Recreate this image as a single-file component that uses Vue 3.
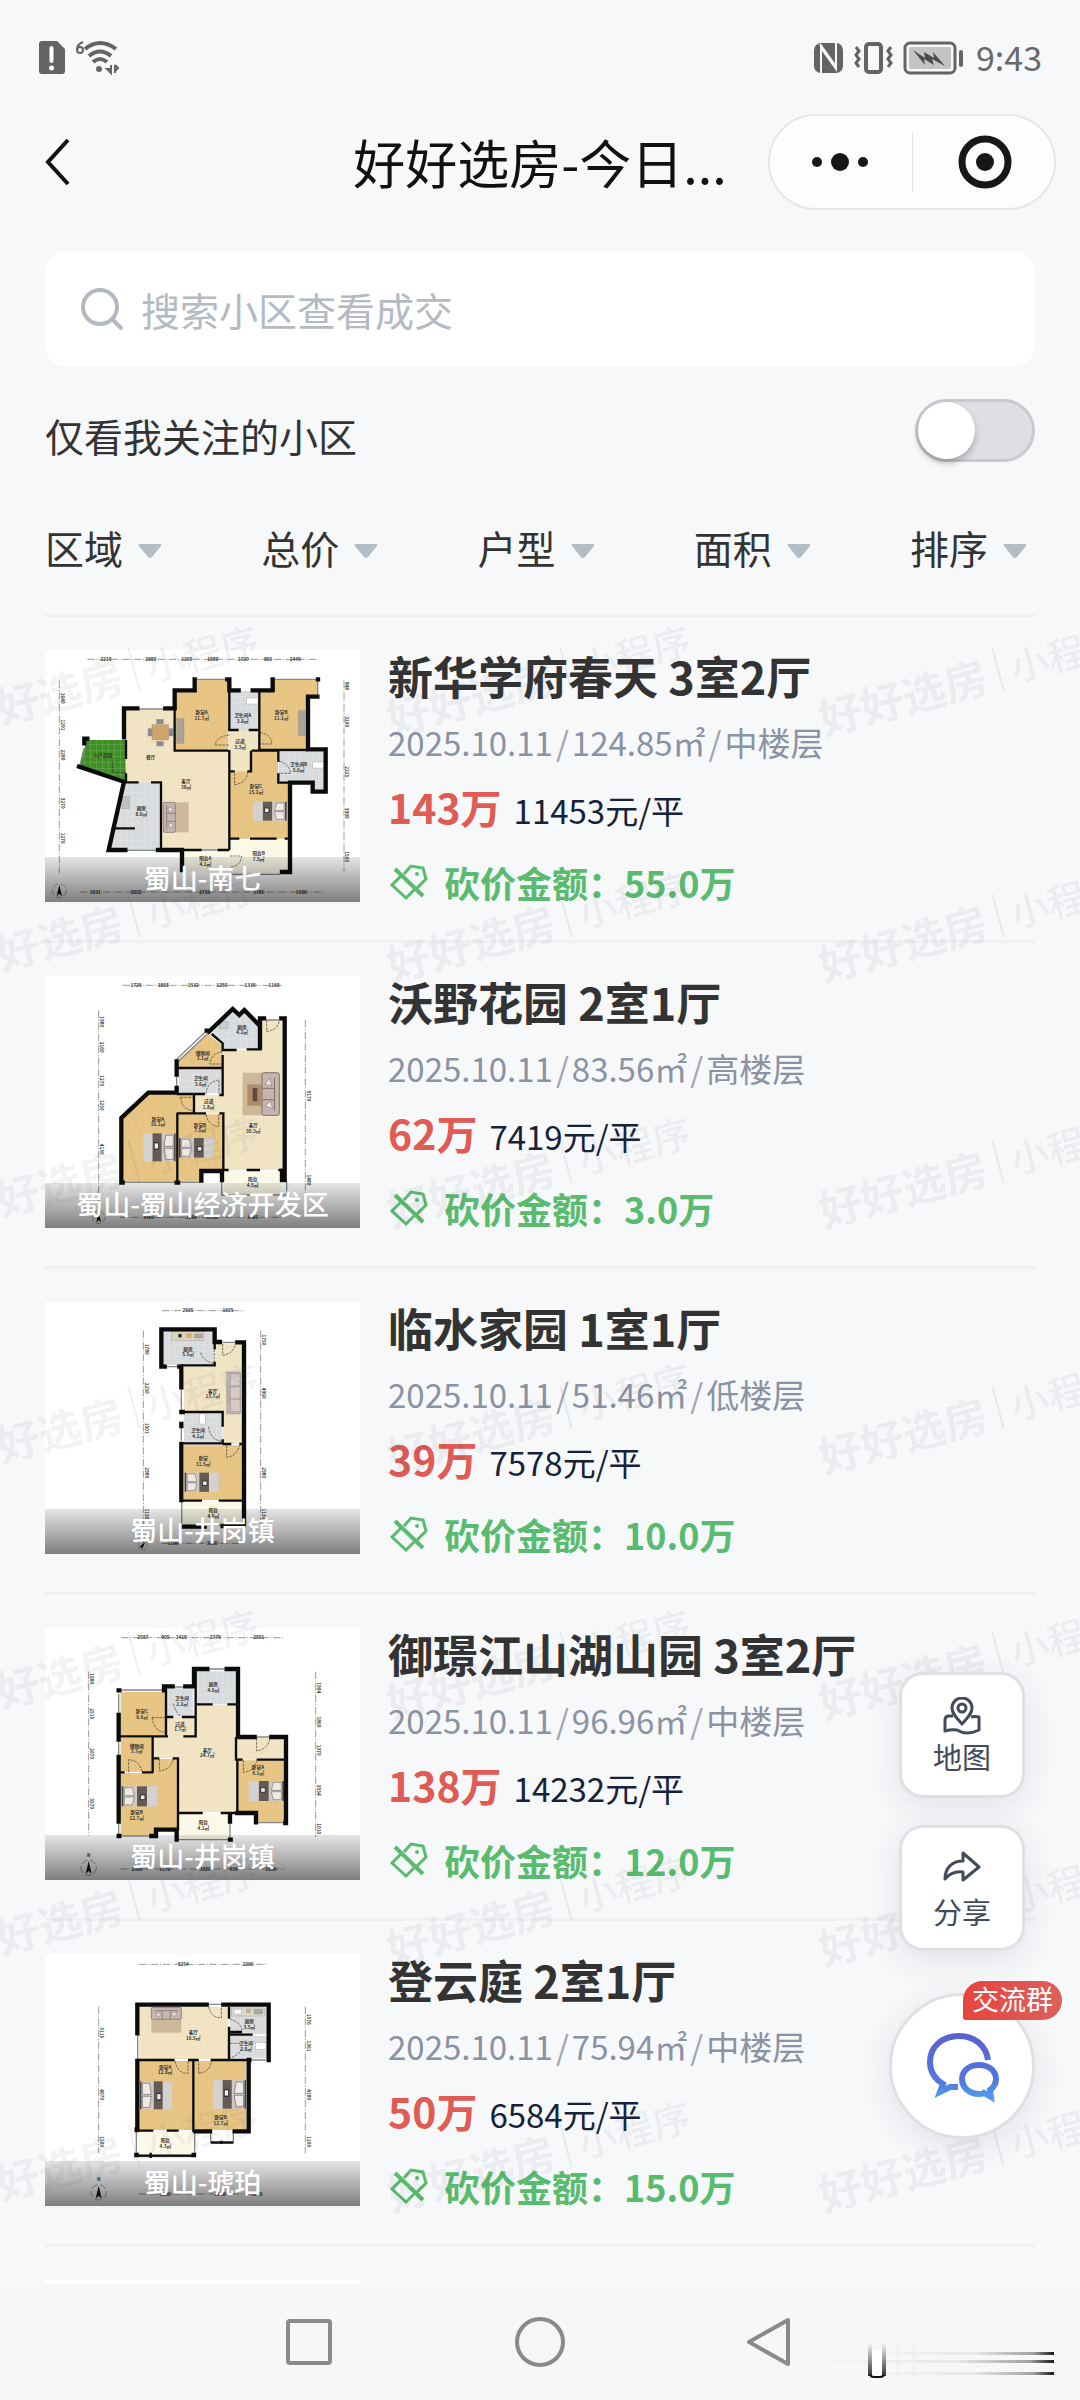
<template>
  <div class="page">
    <div class="status-bar">
      <div class="status-group">
        <svg width="82" height="38" viewBox="0 0 82 38">
          <path d="M4 3h15l8 8v22a3 3 0 0 1-3 3H4a3 3 0 0 1-3-3V6a3 3 0 0 1 3-3z" fill="#636466" />
          <path d="M13.500 10v13" stroke="#fff" stroke-width="4" stroke-linecap="round" />
          <circle cx="13.500" cy="30" r="2.500" fill="#fff" />
          <path d="M45 4c-5 2-6 5-6 8" fill="none" stroke="#636466" stroke-width="2" />
          <circle cx="42" cy="12" r="3" fill="none" stroke="#636466" stroke-width="2" />
          <g fill="none" stroke="#636466" stroke-width="4">
            <path d="M47 11q15-12 31 0" />
            <path d="M51 18q11-9 22 0" />
            <path d="M55 24q7-6 14 0" />
          </g>
          <circle cx="61" cy="31" r="3" fill="#636466" />
          <path d="M73 27v8l-4-4h4M77 27v8M77 27l3 3-3 3" fill="none" stroke="#636466" stroke-width="2" />
        </svg>
      </div>
      <div class="status-group">
        <svg width="152" height="38" viewBox="0 0 152 38">
          <rect x="2" y="5" width="29" height="30" rx="7" fill="#636466" />
          <path d="M9 35V10l15 21V5M8 6l15 21" fill="none" stroke="#f7f8fa" stroke-width="2" />
          <g fill="none" stroke="#636466" stroke-width="4">
            <rect x="54" y="6" width="15" height="28" rx="3" />
            <path d="M44 9l3 4-3 4 3 4-3 4 3 4M79 9l-3 4 3 4-3 4 3 4-3 4" stroke-width="3" />
            <rect x="93" y="5" width="50" height="30" rx="5" stroke-width="3" />
          </g>
          <rect x="97" y="9" width="42" height="22" rx="2" fill="#c2c4c5" />
          <path d="M101 12l12 8-1-6 10 6-1-6 12 14-13-7 2 6-10-6 1 6z" fill="#4b4c4d" />
          <path d="M149 14v13" stroke="#636466" stroke-width="4" stroke-linecap="round" />
        </svg>
        <span class="clock">9:43</span>
      </div>
    </div>

    <header class="nav">
      <button class="back" aria-label="返回">
        <svg width="26" height="48" viewBox="0 0 26 48">
          <path d="M24 2L4 24l20 22" fill="none" stroke="#111" stroke-width="4" />
        </svg>
      </button>
      <h1 class="nav-title">好好选房-今日...</h1>
      <div class="capsule">
        <button aria-label="更多">
          <svg width="60" height="60" viewBox="0 0 60 60" fill="#171717">
            <circle cx="6" cy="30" r="5" />
            <circle cx="29" cy="30" r="9" />
            <circle cx="52" cy="30" r="5" />
          </svg>
        </button>
        <button aria-label="关闭">
          <svg width="60" height="60" viewBox="0 0 60 60">
            <circle cx="32" cy="30" r="23" fill="none" stroke="#171717" stroke-width="7" />
            <circle cx="32" cy="30" r="9" fill="#171717" />
          </svg>
        </button>
      </div>
    </header>

    <main class="content">
      <label class="search">
        <svg width="44" height="44" viewBox="0 0 44 44" fill="none" stroke="#b3b8c0" stroke-width="4">
          <circle cx="19" cy="20" r="17" />
          <path d="M32 33l8 8" stroke-linecap="round" />
        </svg>
        <input v-model="keyword" type="text" placeholder="搜索小区查看成交" aria-label="搜索小区查看成交" />
      </label>

      <div class="follow">
        <label for="follow">仅看我关注的小区</label>
        <input id="follow" v-model="onlyFollowed" class="switch" type="checkbox" />
      </div>

      <div class="filters">
        <label v-for="f in filters" :key="f" class="filter">
          <select :aria-label="f">
            <option>{{ f }}</option>
          </select>
          <svg width="24" height="16" viewBox="0 0 24 16">
            <path d="M2 1h20q2 0 1 2L14 14q-2 2-4 0L1 3q-1-2 1-2z" fill="#b3bdc6" />
          </svg>
        </label>
      </div>

      <ul class="list">
        <li v-for="item in listings" :key="item.name" class="listing">
          <div class="thumb">
            <svg class="plan" :viewBox="item.plan.box">
              <path v-for="(r, i) in item.plan.rooms" :key="'r' + i" :d="r[1]" :fill="floors[r[0]]" />
              <path v-for="(r, i) in item.plan.rooms" :key="'g' + i" :d="r[1]" :fill="r[0] === 'wood' ? 'url(#planks)' : 'url(#tiles)'" />
              <!-- 家具 -->
              <g v-for="(b, i) in item.plan.beds" :key="'b' + i" :transform="b">
                <rect width="106" height="60" fill="#cfc8c3" />
                <rect width="5" height="60" fill="#4b4541" />
                <path d="M8 4h24l6 24H8zM8 32h30l-6 24H8z" fill="#eee9e6" stroke="#7d7570" stroke-width="2" />
                <rect x="46" width="30" height="60" fill="#665b53" />
                <rect x="76" width="30" height="60" fill="#d3d2d1" />
                <rect x="56" y="26" width="14" height="14" fill="#eee" stroke="#333" stroke-width="3" />
              </g>
              <g v-for="(s, i) in item.plan.sofas" :key="'s' + i" :transform="s">
                <rect width="76" height="90" fill="#cdb99a" />
                <rect width="36" height="90" rx="4" fill="#c4b5b0" stroke="#7b6c68" stroke-width="2" />
                <path d="M10 10v70M10 33h26M10 57h26" stroke="#7b6c68" stroke-width="2" />
                <path d="M14 14l16 6-12 10zM16 62l14 4-10 12z" fill="#efe6e3" stroke="#6b5c58" />
              </g>
              <g v-for="(x, i) in item.plan.fixtures" :key="'x' + i">
                <rect :x="x[0]" :y="x[1]" :width="x[2]" :height="x[3]" :fill="x[4]" stroke="#8d8983" />
              </g>
              <path :d="item.plan.windows" fill="none" stroke="#83888b" stroke-width="4" />
              <path :d="item.plan.doors" fill="none" stroke="#3a352c" stroke-width="2" stroke-dasharray="8 3" />
              <path :d="item.plan.thin" fill="none" stroke="#0b0b0b" stroke-width="7" />
              <path :d="item.plan.walls" fill="none" stroke="#0b0b0b" stroke-width="13" stroke-linecap="square" />
              <path :d="item.plan.rulers" fill="none" stroke="#666" stroke-width="2" stroke-dasharray="22 5 3 5" />
              <g class="plan-text">
                <text v-for="(t, i) in item.plan.sizes" :key="'t' + i" :transform="t[1]">{{ t[0] }}</text>
                <text v-for="(t, i) in item.plan.labels" :key="'l' + i" :x="t[0]" :y="t[1]">
                  <tspan>{{ t[2] }}</tspan>
                  <tspan :x="t[0]" dy="17">{{ t[3] }}</tspan>
                </text>
              </g>
              <g v-if="item.plan.compass" :transform="item.plan.compass">
                <circle r="23" fill="none" stroke="#777" stroke-width="2" stroke-dasharray="20 8" />
                <path d="M0-20L9 19 0 10-9 19z" fill="#111" />
              </g>
            </svg>
            <div class="caption">{{ item.district }}</div>
          </div>
          <div class="info">
            <h2 class="name">{{ item.name }}</h2>
            <p class="meta">
              <span>2025.10.11</span><i>/</i><span>{{ item.area }}㎡</span><i>/</i><span>{{ item.level }}</span>
            </p>
            <p class="price"><strong>{{ item.price }}万</strong><span>{{ item.unit }}元/平</span></p>
            <p class="bargain">
              <svg width="40" height="40" viewBox="0 0 40 40" fill="none" stroke="#59bb6e" stroke-width="3">
                <path d="M16 12l7-8 12 2 3 11-9 9" />
                <path d="M13 14l-9 9 14 13 8-8" />
                <path d="M7 7l28 27" stroke-width="4" />
                <circle cx="29" cy="12" r="2" fill="#59bb6e" stroke="none" />
              </svg>
              <span>砍价金额：{{ item.cut }}万</span>
            </p>
          </div>
        </li>
        <li class="listing"><div class="thumb"></div></li>
      </ul>

      <div class="watermarks" aria-hidden="true">
        <div v-for="n in 21" :key="n" class="mark">
          <div class="mark-text"><b>好好选房</b><i></i><span>小程序</span></div>
        </div>
      </div>
    </main>

    <aside class="floating">
      <button class="tool">
        <svg width="38" height="38" viewBox="0 0 38 38" fill="none" stroke="#434b5a" stroke-width="3" stroke-linejoin="round">
          <path d="M19 27C14 21 9 17 9 11a10 10 0 0 1 20 0c0 6-5 10-10 16z" />
          <circle cx="19" cy="11" r="4" />
          <path d="M10 19H5q-3 1-3 4v11q7-2 12-1 5 3 10 3 6 0 12-3V20q-4-1-8 0" />
        </svg>
        <span>地图</span>
      </button>
      <button class="tool share">
        <svg width="38" height="34" viewBox="0 0 38 34" fill="none" stroke="#434b5a" stroke-width="3" stroke-linejoin="round">
          <path d="M20 3l16 14-16 13v-8C12 21 7 23 2 29 2 18 9 11 20 11z" />
        </svg>
        <span>分享</span>
      </button>
      <button class="chat">
        <svg width="76" height="72" viewBox="0 0 76 72" fill="none" stroke="url(#chatGradient)" stroke-width="6">
          <defs>
            <linearGradient id="chatGradient" gradientUnits="userSpaceOnUse" x1="0" y1="2" x2="0" y2="72">
              <stop offset="0" stop-color="#5a5fd0" />
              <stop offset="0.700" stop-color="#5279dc" />
              <stop offset="1" stop-color="#4fa5f5" />
            </linearGradient>
          </defs>
          <path d="M64 30C62 15 50 6 35 6 18 6 6 17 6 32c0 10 5 17 13 22l-3 8 10-5h8" />
          <path d="M55 35c-10 0-17 6-17 14s7 15 17 15c2 0 4 0 5-1l7 4-1-7c4-3 6-6 6-11 0-8-7-14-17-14z" />
        </svg>
        <span class="badge">交流群</span>
      </button>
    </aside>

    <footer class="system-bar">
      <button aria-label="最近任务">
        <svg width="50" height="52" viewBox="0 0 50 52"><rect x="3" y="5" width="42" height="42" rx="2" /></svg>
      </button>
      <button aria-label="主页">
        <svg width="50" height="52" viewBox="0 0 50 52"><circle cx="25" cy="26" r="23" /></svg>
      </button>
      <button aria-label="后退">
        <svg width="50" height="52" viewBox="0 0 50 52"><path d="M43 4v44L4 26z" stroke-linejoin="round" /></svg>
      </button>
      <svg class="streaks" width="260" height="70" viewBox="0 0 260 70">
        <defs>
          <linearGradient id="streakH" x1="0" x2="1" y1="0" y2="0">
            <stop offset="0" stop-color="#000" stop-opacity="0" />
            <stop offset="0.600" stop-color="#000" stop-opacity="0.060" />
            <stop offset="0.900" stop-color="#000" stop-opacity="0.350" />
            <stop offset="1" stop-color="#000" stop-opacity="0.900" />
          </linearGradient>
          <linearGradient id="streakV" x1="0" x2="0" y1="0" y2="1">
            <stop offset="0" stop-color="#000" stop-opacity="0" />
            <stop offset="1" stop-color="#000" stop-opacity="0.800" />
          </linearGradient>
        </defs>
        <g fill="url(#streakH)">
          <rect x="50" y="22" width="204" height="3" />
          <rect x="10" y="30" width="244" height="3" />
          <rect x="50" y="42" width="204" height="3" />
        </g>
        <rect x="71" y="20" width="13" height="26" fill="#fff" />
        <g fill="url(#streakV)">
          <rect x="68" y="13" width="4" height="33" />
          <rect x="82" y="13" width="4" height="33" />
        </g>
        <path d="M70 45q1 2 4 2h6q3 0 4-2" fill="none" stroke="#111" stroke-width="2" />
        <path d="M98 16v30M114 16v30" stroke="#efefef" stroke-width="2" />
      </svg>
    </footer>

    <!-- 户型图公用纹理 -->
    <svg class="defs" width="0" height="0">
      <defs>
        <pattern id="planks" width="24" height="60" patternUnits="userSpaceOnUse">
          <path d="M1 0v60M9 0v30M17 20v40" stroke="#cfa04c" stroke-opacity="0.250" stroke-width="2" />
        </pattern>
        <pattern id="tiles" width="18" height="18" patternUnits="userSpaceOnUse">
          <path d="M0 0h18M0 0v18" stroke="#fff" stroke-opacity="0.350" stroke-width="2" fill="none" />
        </pattern>
      </defs>
    </svg>
  </div>
</template>

<script setup>
  import { ref } from 'vue'

  const keyword = ref('')
  const onlyFollowed = ref(false)
  const filters = ['区域', '总价', '户型', '面积', '排序']

  // 地面颜色
  const floors = {
    wood: '#e8c686',
    cream: '#f1e3c0',
    tile: '#d8dbdd',
    grass: '#3f8f22',
    balcony: '#fbf9e6',
  }

  const listings = [
    {
      name: '新华学府春天 3室2厅',
      district: '蜀山-南七',
      area: '124.85',
      level: '中楼层',
      price: 143,
      unit: 11453,
      cut: '55.0',
      plan: {
        box: '45 60 945 756',
        rooms: [
          ['cream', 'M288 240H434V362H597V300H690V362H665V424H598V660H393V457H288z'],
          ['wood', 'M438 183H498V150H595V360H438z'],
          ['tile', 'M600 183H688V300H600z'],
          ['wood', 'M690 183H732V150H862V200H832V360H690z'],
          ['grass', 'M170 330H285L288 450 150 406z'],
          ['tile', 'M285 457H392V660H238z'],
          ['wood', 'M665 362H744V456H778V626H598V424H665z'],
          ['tile', 'M746 365H884V485H850V456H746z'],
          ['balcony', 'M460 662H595V725H460z'],
          ['balcony', 'M597 630H783V732H597z'],
        ],
        beds: ['translate(770 572) rotate(180) scale(0.950)'],
        sofas: ['translate(400 517)'],
        fixtures: [
          [440, 266, 22, 74, '#a9a295'],
          [805, 242, 20, 74, '#a9a295'],
          [650, 204, 34, 18, '#fff'],
          [848, 396, 34, 18, '#fff'],
          [366, 284, 50, 46, '#cfa36a'],
          [380, 268, 20, 14, '#888c92'],
          [380, 334, 20, 14, '#888c92'],
          [354, 296, 12, 22, '#888c92'],
          [417, 296, 12, 22, '#888c92'],
          [276, 500, 22, 36, '#bfc3c6'],
        ],
        windows: 'M498 148H590M735 148H860M863 150V200M326 237H404M290 661H380M784 630V720M597 733H750M162 355L150 406M515 660H560',
        doors: 'M598 315Q558 320 556 345H598M690 308Q724 312 726 342H690M654 424Q650 460 614 464V426M746 393Q776 400 782 430H746M248 396V428H288M600 678H634Q634 706 602 712',
        thin: 'M434 235V362H595M598 185V300H626M656 300H690M688 185V360H832M598 360V424H614M663 362V424H652M665 362H745V395M745 430V458H778M598 424V660M288 330V387M288 430V457H326M363 457H393V660M245 595H315M455 660H515M562 660H598M598 626H628M660 626H740M764 626H780',
        walls: 'M434 235V181H494V148M592 148H598V181H626M668 181H728V148M864 148V148M862 200H834V358H887V485H848V458H780V726H756M282 322V235H322M406 235H432M172 326H163V340M147 410L282 455 236 660H286M384 660H456V720',
        rulers: 'M172 88H860M88 152V730M942 152V724M150 786H880',
        sizes: [
          ['2218', 'translate(228 93)'], ['2880', 'translate(362 93)'], ['1200', 'translate(470 93)'], ['1880', 'translate(548 93)'], ['1720', 'translate(640 93)'], ['850', 'translate(714 93)'], ['2449', 'translate(796 93)'],
          ['1640', 'translate(92 205) rotate(90)'], ['1291', 'translate(92 285) rotate(90)'], ['2280', 'translate(92 375) rotate(90)'], ['3270', 'translate(92 520) rotate(90)'], ['1276', 'translate(92 625) rotate(90)'],
          ['848', 'translate(946 168) rotate(90)'], ['3200', 'translate(946 275) rotate(90)'], ['2225', 'translate(946 425) rotate(90)'], ['3990', 'translate(946 550) rotate(90)'], ['1500', 'translate(946 680) rotate(90)'],
          ['3231', 'translate(196 791)'], ['2802', 'translate(318 791)'], ['2780', 'translate(524 791)'], ['3786', 'translate(686 791)'], ['1600', 'translate(814 791)'],
        ],
        labels: [
          [515, 252, '卧室A', '11.7㎡'], [638, 262, '卫生间A', '3.8㎡'], [754, 252, '卧室B', '11.1㎡'], [630, 340, '过道', '3.3㎡'], [362, 388, '餐厅', ''], [218, 380, '入户花园', ''], [468, 460, '客厅', '38㎡'],
          [334, 540, '厨房', '8.0㎡'], [678, 474, '卧室C', '15.2㎡'], [806, 408, '卫生间B', '5.0㎡'], [526, 690, '阳台A', '4.1㎡'], [686, 676, '阳台B', '7.5㎡'],
        ],
        compass: 'translate(88 782) scale(0.900)',
      },
    },
    {
      name: '沃野花园 2室1厅',
      district: '蜀山-蜀山经济开发区',
      area: '83.56',
      level: '高楼层',
      price: 62,
      unit: 7419,
      cut: '3.0',
      plan: {
        box: '45 48 945 756',
        rooms: [
          ['cream', 'M580 270H695V180H755V630H580V460H492V405H580z'],
          ['tile', 'M545 222L608 152 628 168 645 155 692 205V266H580V245z'],
          ['wood', 'M447 298L535 222 578 258V322H447z'],
          ['tile', 'M447 328H578V400H447z'],
          ['wood', 'M280 475L355 402H490V460H442V668H280z'],
          ['wood', 'M445 463H578V630H512V668H445z'],
          ['balcony', 'M582 633H755V712H582z'],
        ],
        beds: ['translate(437 604) rotate(180) scale(0.920 1.400)', 'translate(447 534) scale(0.980)'],
        sofas: ['translate(748 466) rotate(180) scale(1.450 1.420)'],
        fixtures: [
          [653, 374, 44, 62, '#b08d68'],
          [668, 384, 14, 40, '#63493a'],
          [568, 184, 26, 22, '#c7cdd3'],
        ],
        windows: 'M440 298L532 210M446 304L538 216M280 667H508M440 350V378M770 665V705H575V665M708 180H748',
        doors: 'M578 275Q542 280 540 312H578M567 360Q530 366 528 402M567 362V402M452 412Q454 448 490 452M452 412H490M528 463Q534 496 566 500V463M710 180V214Q742 212 748 182',
        thin: 'M545 222L578 250V270H620M650 268H695M440 324H578V405H568M578 324V400M440 402H525M578 320V285M492 402V460M440 460H528M568 460H580V630H596M442 460V672M650 630H690M745 630H760',
        walls: 'M537 215L608 147 628 165 643 150 690 198V262M690 205V175H702M764 175V660M754 175H760M530 212H536M440 304V344M440 384V398H355L274 474V668M274 668H278M440 668H444M514 662V633H576V660M756 633V660',
        rulers: 'M278 76H760M206 152V780M826 180V700M270 772H760',
        sizes: [
          ['1725', 'translate(318 81)'], ['1858', 'translate(400 81)'], ['1532', 'translate(490 81)'], ['1250', 'translate(576 81)'], ['1330', 'translate(660 81)'], ['1160', 'translate(732 81)'],
          ['1980', 'translate(210 185) rotate(90)'], ['2160', 'translate(210 262) rotate(90)'], ['1270', 'translate(210 362) rotate(90)'], ['1250', 'translate(210 436) rotate(90)'], ['4130', 'translate(210 568) rotate(90)'],
          ['9170', 'translate(830 408) rotate(90)'], ['1480', 'translate(830 660) rotate(90)'],
          ['3100', 'translate(356 777)'], ['1290', 'translate(484 777)'], ['1350', 'translate(546 777)'], ['3450', 'translate(668 777)'],
        ],
        labels: [
          [636, 206, '厨房', '4.2㎡'], [518, 284, '储物间', '3.1㎡'], [512, 360, '卫生间', '3.6㎡'], [536, 430, '过道', '1.8㎡'], [384, 482, '卧室A', '16.1㎡'],
          [510, 500, '卧室B', '7.5㎡'], [670, 502, '客厅', '30.3㎡'], [668, 664, '阳台', '4.5㎡'],
        ],
        compass: 'translate(206 772) scale(0.800)',
      },
    },
    {
      name: '临水家园 1室1厅',
      district: '蜀山-井岗镇',
      area: '51.46',
      level: '低楼层',
      price: 39,
      unit: 7578,
      cut: '10.0',
      plan: {
        box: '45 36 945 756',
        rooms: [
          ['tile', 'M398 122H552V225H398z'],
          ['cream', 'M462 230H555V160H636V462H578V365H462z'],
          ['tile', 'M462 370H577V460H462z'],
          ['wood', 'M462 466H636V630H462z'],
          ['balcony', 'M456 636H636V704H456z'],
        ],
        beds: ['translate(464 548) scale(0.960)'],
        sofas: [],
        fixtures: [
          [590, 246, 42, 126, '#bfb1ac'],
          [602, 252, 28, 36, '#d6cbc6'],
          [602, 290, 28, 36, '#d6cbc6'],
          [602, 328, 28, 36, '#d6cbc6'],
          [424, 124, 98, 28, '#ddd3bd'],
          [445, 132, 10, 10, '#222'],
          [470, 132, 14, 10, '#d8b45a'],
          [494, 132, 24, 12, '#aaa7a2'],
          [508, 372, 18, 30, '#fff'],
        ],
        windows: 'M404 230H442M454 298V362M454 412V452M455 636V704M578 157H616M530 706H576',
        doors: 'M512 188Q522 216 552 220M578 162V196Q610 192 616 162M536 410Q540 450 576 454M590 466V502Q622 498 628 466M553 178V218',
        thin: 'M396 228H404M452 226H554V215M554 160V178M455 366H578V410M455 460H578V448M578 462H604M628 462H640M455 632H516M566 632H640',
        walls: 'M404 230H394V118H554V156H570M622 157H642V700M454 230V292M454 366H458M454 402V408M454 462V630M456 710H524M578 708H640M448 230H452',
        rulers: 'M396 62H642M340 122V770M692 122V710M396 760H640',
        sizes: [
          ['2505', 'translate(474 67)'], ['1605', 'translate(594 67)'],
          ['1780', 'translate(344 178) rotate(90)'], ['2250', 'translate(344 295) rotate(90)'], ['1501', 'translate(344 415) rotate(90)'], ['2980', 'translate(344 548) rotate(90)'], ['1130', 'translate(344 672) rotate(90)'],
          ['1750', 'translate(696 150) rotate(90)'], ['4960', 'translate(696 310) rotate(90)'], ['2980', 'translate(696 548) rotate(90)'], ['1130', 'translate(696 672) rotate(90)'],
          ['1100', 'translate(430 765)'], ['3030', 'translate(546 765)'],
        ],
        labels: [
          [474, 182, '厨房', '5.5㎡'], [548, 308, '客厅', '13.7㎡'], [504, 426, '卫生间', '4.2㎡'], [520, 510, '卧室', '11.5㎡'], [550, 666, '阳台', '4.8㎡'],
        ],
        compass: 'translate(338 766) scale(0.600) rotate(40)',
      },
    },
    {
      name: '御璟江山湖山园 3室2厅',
      district: '蜀山-井岗镇',
      area: '96.96',
      level: '中楼层',
      price: 138,
      unit: 14232,
      cut: '12.0',
      plan: {
        box: '45 53 945 756',
        rooms: [
          ['cream', 'M408 320H497V284H617V383H762V448H620V606H445V444H370V380H408z'],
          ['tile', 'M497 183H617V282H497z'],
          ['tile', 'M410 234H490V318H410z'],
          ['wood', 'M272 244H406V376H272z'],
          ['wood', 'M272 382H366V484H272z'],
          ['wood', 'M272 488H370V446H442V654H372V674H272z'],
          ['wood', 'M624 450H762V636H684V604H624z'],
          ['balcony', 'M446 612H598V686H446z'],
        ],
        beds: ['translate(275 528)', 'translate(762 572) rotate(180)'],
        sofas: [],
        fixtures: [],
        windows: 'M274 239H398M266 250V308M266 396V434M266 640V672M274 677H358M434 230H462M538 176H584M680 380H718M600 640V682M684 637H762M446 688H598',
        doors: 'M366 322Q372 364 408 366M366 322H406M430 280Q438 310 454 318M388 446V482Q424 478 430 446M296 486V448Q330 450 336 486M680 384V422Q714 416 720 384M640 450V486Q674 482 680 452',
        thin: 'M408 230V376M268 378H414M460 378H497V180M408 320H430M456 320H495M498 282H548M592 282H620M368 378V486M268 486H284M336 486H370M370 444H388M428 444H444V660M618 380V448H638M680 448H766M622 448V606M444 608H518M572 608H622',
        walls: 'M266 240H268M266 314V388M266 440V634M266 677H268M364 677H378V658H440V688M402 240V228H428M466 228H492V176H532M590 176H624V380H674M724 380H768V636M766 638H768M622 608H678V636M600 612V634M600 688H602',
        rulers: 'M274 82H762M176 184V676M857 184V680M270 776H764',
        sizes: [
          ['2587', 'translate(338 87)'], ['900', 'translate(406 87)'], ['1419', 'translate(454 87)'], ['2379', 'translate(556 87)'], ['2881', 'translate(686 87)'],
          ['1080', 'translate(180 205) rotate(90)'], ['2515', 'translate(180 310) rotate(90)'], ['2070', 'translate(180 430) rotate(90)'], ['3570', 'translate(180 580) rotate(90)'],
          ['1904', 'translate(861 232) rotate(90)'], ['1860', 'translate(861 335) rotate(90)'], ['1370', 'translate(861 420) rotate(90)'], ['3554', 'translate(861 540) rotate(90)'], ['1010', 'translate(861 655) rotate(90)'],
          ['2100', 'translate(322 781)'], ['1170', 'translate(404 781)'], ['3320', 'translate(526 781)'], ['930', 'translate(610 781)'], ['1620', 'translate(722 781)'],
          ['N', 'translate(176 740)'],
        ],
        labels: [
          [550, 228, '厨房', '4.6㎡'], [456, 270, '卫生间', '2.2㎡'], [336, 308, '卧室C', '6.6㎡'], [450, 346, '过道', '1.7㎡'], [320, 412, '储物间', '3.7㎡'], [532, 424, '客厅', '24.7㎡'],
          [684, 476, '卧室A', '9.1㎡'], [320, 612, '卧室B', '12.7㎡'], [520, 642, '阳台', '4.1㎡'],
        ],
        compass: 'translate(176 772)',
      },
    },
    {
      name: '登云庭 2室1厅',
      district: '蜀山-琥珀',
      area: '75.94',
      level: '中楼层',
      price: 50,
      unit: 6584,
      cut: '15.0',
      plan: {
        box: '45 72 945 756',
        rooms: [
          ['cream', 'M328 230H595V388H328z'],
          ['tile', 'M600 230H710V312H600z'],
          ['tile', 'M600 317H710V385H600z'],
          ['wood', 'M328 393H487V600H328z'],
          ['wood', 'M492 393H648V600H492z'],
          ['balcony', 'M322 606H492V674H322z'],
        ],
        beds: ['translate(330 454) scale(0.900 1.400)', 'translate(648 536) rotate(180) scale(0.930 1.430)'],
        sofas: ['translate(454 232) rotate(90)'],
        fixtures: [
          [604, 234, 100, 24, '#dcdad2'],
          [612, 238, 22, 14, '#fff'],
          [650, 238, 12, 10, '#d8b45a'],
          [672, 238, 26, 14, '#a9a7a3'],
          [676, 338, 32, 20, '#fff'],
        ],
        windows: 'M323 316V386M536 223H574M664 390H708M542 606V636H610V606M319 606V670M494 606V670M322 680H488',
        doors: 'M536 230Q542 262 574 264V230M600 268Q634 276 636 304M600 340H634M634 356Q628 376 600 384M436 393Q440 430 474 430V393M506 430V393M506 430Q540 426 544 393',
        thin: 'M597 230V266M597 290V388M597 314H668M600 306H636M320 390H434M474 390H506M542 390H660M490 393V606M318 602H370M410 602H446M322 677H488M542 638H610M362 668V684M574 632V642',
        walls: 'M322 310V224H530M580 224H716V390M656 390V604H614M540 604H496M322 393V598M320 598V600M319 675H320M491 675H492M656 390H658',
        rulers: 'M328 103H710M206 230V670M826 230V670M326 792H700',
        sizes: [
          ['5254', 'translate(460 108)'], ['2206', 'translate(654 108)'],
          ['3115', 'translate(210 308) rotate(90)'], ['4070', 'translate(210 494) rotate(90)'], ['1500', 'translate(210 635) rotate(90)'],
          ['1576', 'translate(830 268) rotate(90)'], ['1361', 'translate(830 348) rotate(90)'], ['4180', 'translate(830 494) rotate(90)'], ['1200', 'translate(830 635) rotate(90)'],
          ['3200', 'translate(406 797)'], ['3100', 'translate(570 797)'], ['1005', 'translate(680 797)'],
          ['N', 'translate(206 752)'],
        ],
        labels: [
          [490, 312, '客厅', '16.5㎡'], [658, 280, '厨房', '3.5㎡'], [648, 346, '卫生间', '2.8㎡'], [406, 416, '卧室A', '12.8㎡'], [572, 568, '卧室B', '12.7㎡'], [406, 636, '阳台', '4.3㎡'],
        ],
        compass: 'translate(206 787)',
      },
    },
  ]
</script>

<style>
  html,
  body {
    margin: 0;
    background: #f7f8fa;
  }
</style>

<style scoped>
  .page {
    position: relative;
    display: flex;
    flex-direction: column;
    height: 100vh;
    overflow: hidden;
    background: #f7f8fa;
    color: #333;
    font-family: 'Noto Sans CJK SC', 'Noto Sans', sans-serif;
  }

  .page * {
    box-sizing: border-box;
  }

  button {
    padding: 0;
    border: 0;
    background: none;
    color: inherit;
    font-family: inherit;
    cursor: pointer;
  }

  svg {
    display: block;
    flex: none;
  }

  .defs {
    position: absolute;
  }

  /* 状态栏 */
  .status-bar {
    display: flex;
    flex: none;
    align-items: center;
    justify-content: space-between;
    height: 114px;
    padding: 0 38px;
  }

  .status-group {
    display: flex;
    align-items: center;
    gap: 12px;
  }

  .clock {
    color: #68696b;
    font-size: 34px;
    line-height: 40px;
  }

  /* 标题栏 */
  .nav {
    display: grid;
    flex: none;
    grid-template-columns: 1fr auto 1fr;
    align-items: center;
    height: 94px;
    padding: 0 24px;
  }

  .back {
    justify-self: start;
    margin-left: 20px;
  }

  .nav-title {
    margin: 0;
    color: #111;
    font-size: 52px;
    font-weight: 400;
    line-height: 72px;
  }

  .capsule {
    display: flex;
    justify-self: end;
    align-items: center;
    width: 288px;
    height: 96px;
    border: 2px solid #e6e7e8;
    border-radius: 48px;
    background: #fdfdfd;
  }

  .capsule button {
    display: flex;
    flex: 1;
    justify-content: center;
  }

  .capsule button + button {
    border-left: 1px solid #e3e4e5;
  }

  .content {
    position: relative;
    flex: 1;
    min-height: 0;
    padding: 44px 45px 0;
    overflow: hidden;
  }

  .search {
    display: flex;
    align-items: center;
    gap: 16px;
    height: 114px;
    padding: 0 36px;
    border-radius: 20px;
    background: #fff;
  }

  .search input {
    flex: 1;
    min-width: 0;
    padding: 0;
    border: 0;
    outline: none;
    background: none;
    color: #333;
    font-family: inherit;
    font-size: 39px;
    line-height: 56px;
  }

  .search input::placeholder {
    color: #b5b9c1;
    opacity: 1;
  }

  .follow {
    display: flex;
    align-items: flex-start;
    justify-content: space-between;
    margin-top: 33px;
    font-size: 39px;
    line-height: 72px;
  }

  .switch {
    width: 120px;
    height: 63px;
    margin: 0;
    border: 3px solid #c9cacd;
    border-radius: 32px;
    appearance: none;
    background: #dedfe3;
    cursor: pointer;
  }

  .switch::before {
    display: block;
    width: 57px;
    height: 57px;
    border-radius: 50%;
    background: #fff;
    box-shadow: 0 4px 6px rgba(0, 0, 0, 0.25);
    content: '';
  }

  .switch:checked {
    background: #59bb6e;
  }

  .switch:checked::before {
    margin-left: 57px;
  }

  .filters {
    display: flex;
    justify-content: space-between;
    margin-top: 48px;
    padding-bottom: 39px;
    border-bottom: 3px solid #eff0f2;
  }

  .filter {
    display: flex;
    align-items: center;
    gap: 14px;
    padding-right: 8px;
  }

  .filter select {
    height: 56px;
    padding: 0;
    border: 0;
    appearance: none;
    background: none;
    color: #333;
    font-family: inherit;
    font-size: 39px;
    line-height: 56px;
  }

  .filter svg {
    margin-top: 8px;
  }

  /* 成交列表 */
  .list {
    margin: 0;
    padding: 0;
    list-style: none;
  }

  .listing {
    display: flex;
    gap: 28px;
    padding: 33px 0 38px;
    border-bottom: 3px solid #eff0f2;
  }

  .thumb {
    position: relative;
    flex: none;
    width: 315px;
    height: 252px;
    background: #fff;
  }

  .plan {
    width: 100%;
    height: 100%;
  }

  .plan-text {
    fill: #333;
    font-size: 14px;
    font-weight: 700;
    text-anchor: middle;
  }

  .caption {
    position: absolute;
    right: 0;
    bottom: 0;
    left: 0;
    height: 45px;
    background: linear-gradient(rgba(0, 0, 0, 0.1), rgba(0, 0, 0, 0.5));
    color: #fff;
    font-size: 27px;
    font-weight: 500;
    line-height: 42px;
    text-align: center;
  }

  .info {
    flex: 1;
    min-width: 0;
  }

  .info p {
    margin: 0;
  }

  .name {
    margin: 0;
    font-size: 45px;
    font-weight: 700;
    line-height: 52px;
    white-space: nowrap;
  }

  .info .meta {
    display: flex;
    margin-top: 18px;
    color: #8a92a3;
    font-size: 33px;
    line-height: 44px;
  }

  .meta i {
    padding: 0 3px;
    color: #a0a5ae;
    font-style: normal;
  }

  .info .price {
    display: flex;
    align-items: baseline;
    gap: 12px;
    margin-top: 16px;
    color: #16213a;
    font-size: 33px;
    line-height: 52px;
  }

  .price strong {
    color: #df5b54;
    font-size: 41px;
  }

  .info .bargain {
    display: flex;
    align-items: center;
    gap: 16px;
    margin-top: 26px;
    color: #59bb6e;
    font-size: 36px;
    font-weight: 700;
    line-height: 40px;
  }

  /* 水印层 */
  .watermarks {
    position: absolute;
    top: 346px;
    left: -110px;
    display: grid;
    grid-template-columns: repeat(3, 432px);
    grid-auto-rows: 246px;
    color: rgba(60, 70, 90, 0.08);
    pointer-events: none;
  }

  .mark {
    display: flex;
    align-items: center;
    justify-content: center;
  }

  .mark-text {
    display: flex;
    align-items: center;
    gap: 12px;
    transform: rotate(-15deg);
    font-size: 38px;
    font-weight: 500;
    white-space: nowrap;
  }

  .mark-text b {
    font-size: 43px;
    font-weight: 700;
  }

  .mark-text i {
    width: 2px;
    height: 44px;
    background: currentColor;
  }

  /* 悬浮按钮 */
  .floating {
    position: absolute;
    right: 45px;
    bottom: 261px;
    display: flex;
    flex-direction: column;
    align-items: center;
    gap: 27px;
    width: 146px;
  }

  .tool {
    display: flex;
    flex-direction: column;
    align-items: center;
    gap: 3px;
    width: 126px;
    height: 126px;
    padding-top: 22px;
    border: 3px solid #dfe0e3;
    border-radius: 24px;
    background: #fff;
    box-shadow: 0 8px 32px rgba(30, 40, 60, 0.1);
    color: #434b5a;
    font-size: 29px;
    line-height: 36px;
  }

  .share {
    gap: 9px;
  }

  .chat {
    position: relative;
    display: flex;
    align-items: center;
    justify-content: center;
    width: 146px;
    height: 146px;
    margin-top: 15px;
    border: 3px solid #dfe0e3;
    border-radius: 50%;
    background: #fff;
    box-shadow: 0 8px 32px rgba(30, 40, 60, 0.1);
  }

  .badge {
    position: absolute;
    top: -15px;
    right: -30px;
    width: 99px;
    height: 39px;
    border-radius: 20px 20px 20px 3px;
    background: linear-gradient(90deg, #e8443e, #dc605c);
    color: #fff;
    font-size: 27px;
    line-height: 36px;
    text-align: center;
  }

  /* 系统导航 */
  .system-bar {
    position: relative;
    display: flex;
    flex: none;
    align-items: center;
    justify-content: center;
    gap: 180px;
    height: 116px;
    background: #f7f7f7;
  }

  .system-bar button svg {
    fill: none;
    stroke: #8a8a8a;
    stroke-width: 4px;
  }

  .streaks {
    position: absolute;
    right: 20px;
    bottom: 0;
  }
</style>
